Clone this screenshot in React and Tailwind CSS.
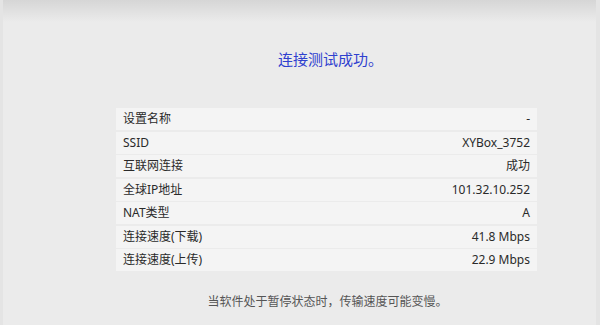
const rows = [
  ['设置名称', '-'],
  ['SSID', 'XYBox_3752'],
  ['互联网连接', '成功'],
  ['全球IP地址', '101.32.10.252'],
  ['NAT类型', 'A'],
  ['连接速度(下载)', '41.8 Mbps'],
  ['连接速度(上传)', '22.9 Mbps'],
]

export default function App() {
  return (
    <div
      className="relative w-[600px] h-[325px] bg-[#ebebeb] overflow-hidden border-l-[3px] border-r-[4px] border-[#e4e4e4]"
      style={{ fontFamily: '"Noto Sans", "Noto Sans CJK SC", sans-serif' }}
    >
      <div className="absolute inset-x-0 top-0 h-[22px] bg-gradient-to-b from-[#d6d6d6] to-[#ebebeb]" />
      <div className="relative flex flex-col items-center pl-[54px]">
        <div className="pt-[48px] ml-[8px] text-[15px] leading-[22px] text-[#2f40cf]">连接测试成功。</div>
        <div className="mt-[38px] w-[421px] flex flex-col gap-[1.5px]">
          {rows.map(([k, v]) => (
            <div
              key={k}
              className="h-[22px] bg-[#f4f4f4] flex items-center justify-between px-[7px] text-[12px] text-[#2a2a2a]"
            >
              <span>{k}</span>
              <span>{v}</span>
            </div>
          ))}
        </div>
        <div className="mt-[22px] text-[12px] leading-[18px] text-[#555] ml-[2px]">
          当软件处于暂停状态时，传输速度可能变慢。
        </div>
      </div>
    </div>
  )
}
